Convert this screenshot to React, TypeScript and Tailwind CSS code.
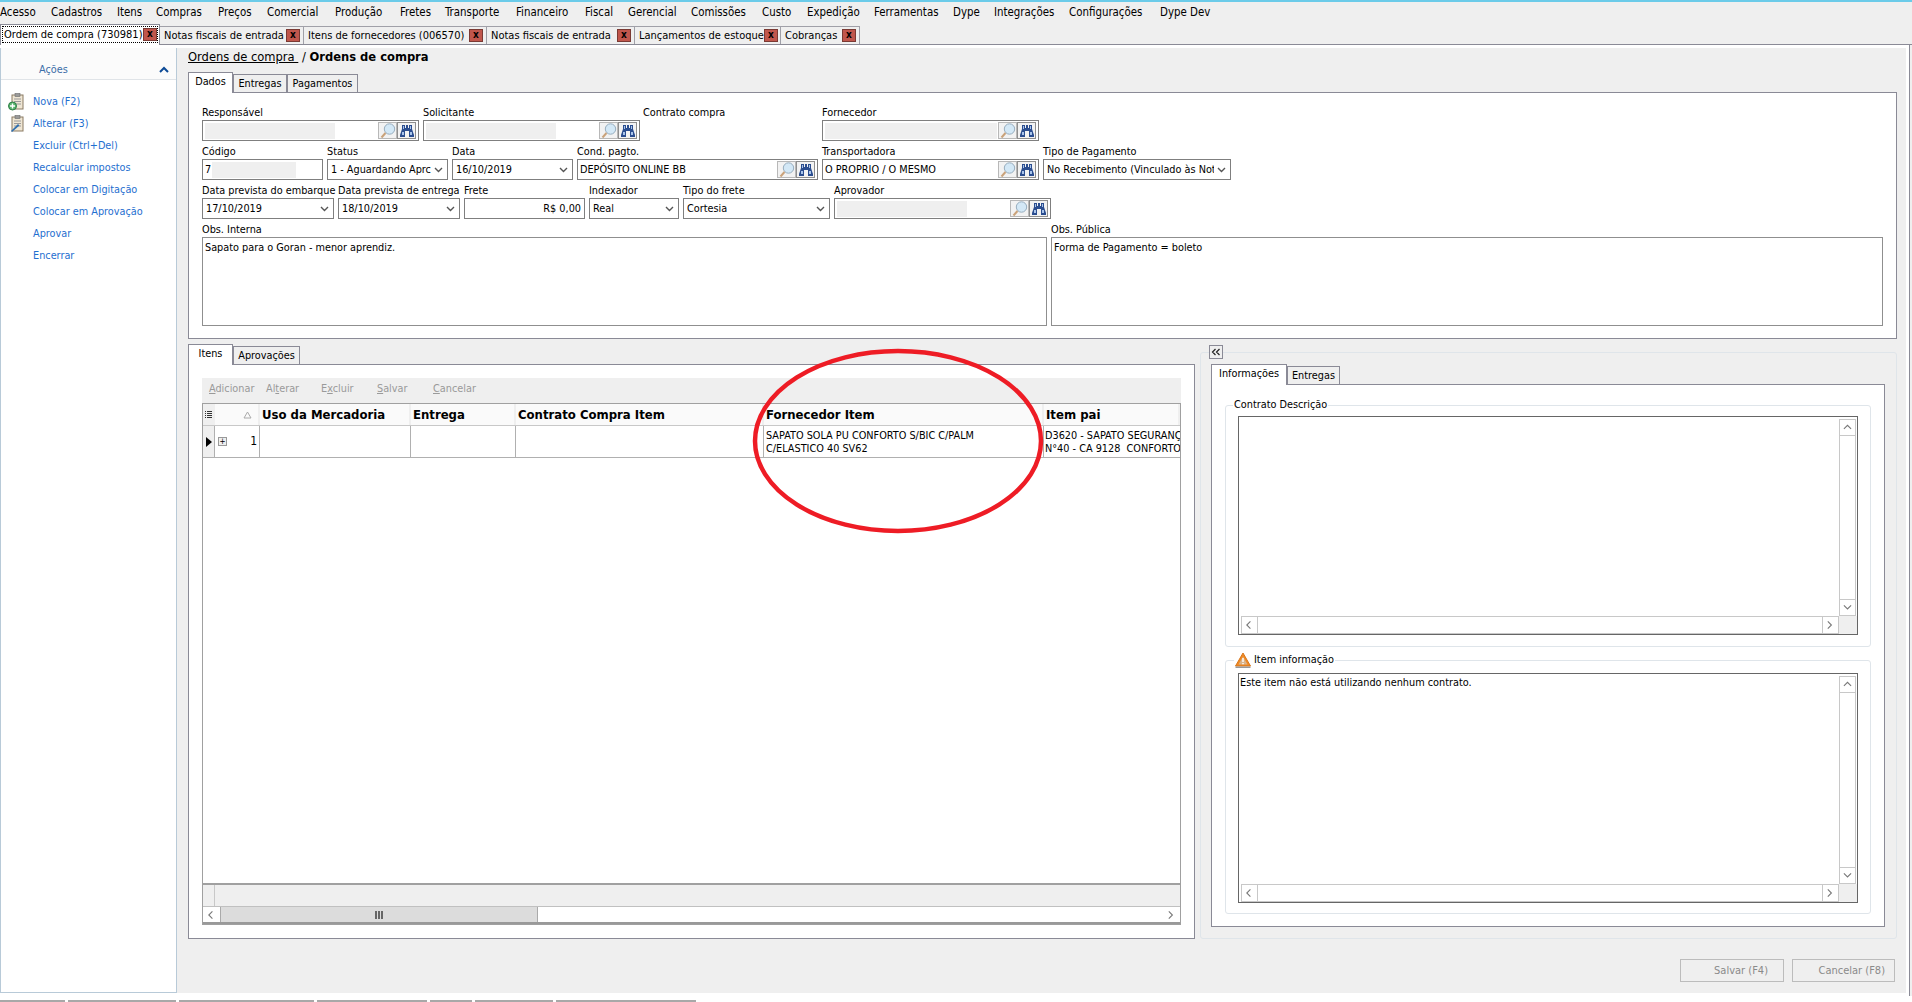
import React from "react";

const menuItems: [string, string][] = [
  ["Acesso", "w-[51px]"], ["Cadastros", "w-[66px]"], ["Itens", "w-[39px]"], ["Compras", "w-[62px]"], ["Preços", "w-[49px]"], ["Comercial", "w-[68px]"], ["Produção", "w-[65px]"], ["Fretes", "w-[45px]"], ["Transporte", "w-[71px]"], ["Financeiro", "w-[69px]"], ["Fiscal", "w-[43px]"], ["Gerencial", "w-[63px]"], ["Comissões", "w-[71px]"], ["Custo", "w-[45px]"], ["Expedição", "w-[67px]"], ["Ferramentas", "w-[79px]"], ["Dype", "w-[41px]"], ["Integrações", "w-[75px]"], ["Configurações", "w-[91px]"], ["Dype Dev", "w-[60px]"],
];

const CloseX = () => (
  <span className="flex h-[13px] w-[14px] shrink-0 items-center justify-center border border-[#7a3a34] bg-[#c0564c] pb-[1px] text-[10px] font-bold leading-none text-black">x</span>
);

const DocTab = ({ label, className }: { label: string; className: string }) => (
  <div className={`flex h-[18px] items-center justify-between border border-b-0 border-l-0 border-[#a0a0a8] pl-[4px] pr-[3px] ${className}`}>
    <span className="whitespace-nowrap">{label}</span>
    <CloseX />
  </div>
);

const Magnifier = () => (
  <span className="flex h-[17px] w-[19px] shrink-0 items-center justify-center border border-[#b8b8b8] bg-[#f2f2f2]">
    <svg width="16" height="16" viewBox="0 0 16 16">
      <circle cx="9.5" cy="6" r="5.2" fill="#d3e8f6" stroke="#98aebf" />
      <path d="M5.5 10 L1.5 14.5" stroke="#c9a27a" strokeWidth="2" />
    </svg>
  </span>
);
const Binoc = () => (
  <span className="flex h-[17px] w-[19px] shrink-0 items-center justify-center border border-[#8f8f8f] bg-[#f2f2f2]">
    <svg width="16" height="14" viewBox="0 0 16 14">
      <path d="M3 1h3v3h1V1h2v3h1V1h3v4l2 6v2H10V7H6v6H1v-2l2-6z" fill="#2b4d8f" />
      <path d="M3 8h2v3H3zM11 8h2v3h-2zM4 2h1v3H4zM11 2h1v3h-1z" fill="#a9c4ea" />
    </svg>
  </span>
);

const Lookup = ({ className, fill, text }: { className: string; fill?: string; text?: string }) => (
  <div className={`flex h-[21px] items-center border border-[#7f7f7f] bg-white pl-[2px] pr-[2px] ${className}`}>
    {text ? <span className="flex-1 overflow-hidden whitespace-nowrap">{text}</span> : <span className="flex-1"><span className={`block h-[16px] bg-[#efefef] ${fill}`} /></span>}
    <Magnifier />
    <Binoc />
  </div>
);

const Chevron = () => (
  <svg width="9" height="6" viewBox="0 0 9 6" className="shrink-0">
    <path d="M1 1l3.5 3.5L8 1" fill="none" stroke="#555" strokeWidth="1.4" />
  </svg>
);

const Sel = ({ className, text }: { className: string; text: string }) => (
  <div className={`flex h-[21px] items-center justify-between gap-[3px] border border-[#7f7f7f] bg-white pl-[3px] pr-[4px] ${className}`}>
    <span className="overflow-hidden whitespace-nowrap">{text}</span>
    <Chevron />
  </div>
);

const Field = ({ label, className, children }: { label: string; className: string; children?: React.ReactNode }) => (
  <div className={`flex flex-col ${className}`}>
    <span className="h-[14px] whitespace-nowrap leading-[14px]">{label}</span>
    {children}
  </div>
);

const TabStrip = ({ tabs }: { tabs: [string, string, boolean][] }) => (
  <div className="flex h-[20px] items-end">
    {tabs.map(([t, w, on]) => (
      <div key={t} className={on ? `relative z-10 -mb-px flex h-[21px] items-start justify-center border border-b-0 border-[#8a8a96] bg-white pt-[2px] ${w}` : `flex h-[18px] items-center justify-center border border-b-0 border-[#8a8a96] bg-[#efefef] ${w}`}>
        {t}
      </div>
    ))}
  </div>
);

const Arrow = ({ d }: { d: "l" | "r" | "u" | "v" }) => {
  const p = d === "l" ? "M6 1L2 5l4 4" : d === "r" ? "M2 1l4 4-4 4" : d === "u" ? "M1 6l4-4 4 4" : "M1 2l4 4 4-4";
  return (
    <svg width="9" height="10" viewBox="0 0 10 10">
      <path d={p} fill="none" stroke="#777" strokeWidth="1.2" />
    </svg>
  );
};

const TextBoxScroll = ({ className, text }: { className: string; text?: string }) => (
  <div className={`mx-[12px] flex flex-col border border-[#666] bg-white ${className}`}>
    <div className="flex min-h-0 flex-1">
      <div className="flex-1 pl-[1px] pt-[2px]">{text}</div>
      <div className="mt-[2px] mr-[1px] flex w-[17px] flex-col justify-between border border-[#c8c8c8]">
        <span className="flex h-[16px] items-center justify-center border-b border-[#c8c8c8]"><Arrow d="u" /></span>
        <span className="flex h-[16px] items-center justify-center border-t border-[#c8c8c8]"><Arrow d="v" /></span>
      </div>
    </div>
    <div className="flex h-[18px]">
      <div className="ml-[2px] flex flex-1 justify-between border border-[#c8c8c8]">
        <span className="flex w-[16px] items-center justify-center border-r border-[#c8c8c8]"><Arrow d="l" /></span>
        <span className="flex w-[16px] items-center justify-center border-l border-[#c8c8c8]"><Arrow d="r" /></span>
      </div>
      <div className="w-[18px] bg-[#efefef]" />
    </div>
  </div>
);

const Clip = ({ edit }: { edit?: boolean }) => (
  <svg width="17" height="18" viewBox="0 0 17 18" className="shrink-0">
    <rect x="4" y="2" width="11" height="14" fill="#efe6d4" stroke="#8a7a62" />
    <rect x="7" y="0.5" width="5" height="3" fill="#9a9a9a" stroke="#6a6a6a" strokeWidth="0.6" />
    <path d="M6 6h7M6 8.5h7M6 11h7" stroke="#9a9a9a" />
    {edit ? <path d="M3 16l7-7 1.5 1.5L4 17z" fill="#2f6fb0" /> : <g><circle cx="4.5" cy="13" r="4" fill="#5ab56e" stroke="#2d7d45" /><path d="M4.5 10.5v5M2 13h5" stroke="#fff" strokeWidth="1.4" /></g>}
  </svg>
);

const Warn = () => (
  <svg width="16" height="16" viewBox="0 0 16 16" className="shrink-0">
    <path d="M8 1L15.5 14H.5z" fill="#f08a24" stroke="#d8761a" />
    <path d="M8 4.5L12.5 12.5H3.5z" fill="#d9b48c" />
    <path d="M8 6v4M8 11v1.2" stroke="#fff" strokeWidth="1.4" />
    <rect x="0.5" y="14.5" width="15" height="1.5" fill="#999" />
  </svg>
);

const HCell = ({ className, children }: { className: string; children?: React.ReactNode }) => (
  <div className={`flex items-center overflow-hidden whitespace-nowrap border-r-2 border-[#efefef] pl-[2px] text-[13px] font-bold text-black ${className}`}>{children}</div>
);
const RCell = ({ className, children }: { className: string; children?: React.ReactNode }) => (
  <div className={`overflow-hidden border-r border-[#b0b0b0] ${className}`}>{children}</div>
);

const actions = ["Excluir (Ctrl+Del)", "Recalcular impostos", "Colocar em Digitação", "Colocar em Aprovação", "Aprovar", "Encerrar"];
const bottomTabs = ["w-[65px]", "w-[108px]", "w-[135px]", "w-[110px]", "w-[42px]", "w-[78px]", "w-[140px]"];

export default function App() {
  return (
    <div className="relative flex h-[1002px] w-[1912px] flex-col overflow-hidden bg-[#efefef] font-['DejaVu_Sans_Condensed','DejaVu_Sans',sans-serif] text-[10.8px] leading-[14px] text-black">
      <div className="h-[2px] bg-[#6bcbe9]" />
      <div className="flex h-[22px] items-center pb-[2px] text-[11.4px]">
        {menuItems.map(([m, w]) => (
          <span key={m} className={`whitespace-nowrap ${w}`}>{m}</span>
        ))}
      </div>
      <div className="flex h-[21px] items-end border-b border-[#8a8a96] text-[11px]">
        <div className="relative z-10 -mb-px flex h-[21px] w-[160px] items-start border border-b-0 border-[#8a8a96] bg-white pt-[2px] pl-[2px] pr-[2px]">
          <div className="flex h-[15px] w-full items-center justify-between pl-[1px] outline-dotted outline-1 outline-black">
            <span className="whitespace-nowrap">Ordem de compra (730981)</span>
            <CloseX />
          </div>
        </div>
        <DocTab label="Notas fiscais de entrada" className="w-[144px]" />
        <DocTab label="Itens de fornecedores (006570)" className="w-[183px]" />
        <DocTab label="Notas fiscais de entrada" className="w-[148px]" />
        <DocTab label="Lançamentos de estoque" className="w-[146px]" />
        <DocTab label="Cobranças" className="w-[79px]" />
      </div>
      <div className="flex min-h-0 flex-1 flex-col">
        <div className="mr-[3px] flex min-h-0 flex-1 border-y-[3px] border-r-[3px] border-white outline-1 outline-[#8a8a96]">
          <aside className="flex w-[177px] shrink-0 flex-col border-x border-b border-[#b8cad8] bg-white">
            <div className="flex h-[32px] shrink-0 items-center justify-between border-b border-[#e0e4e8] bg-[#fbfbfb] pl-[38px] pr-[7px] pt-[12px]">
              <span className="text-[#3b6ea8]">Ações</span>
              <svg width="10" height="7" viewBox="0 0 10 7"><path d="M1 6l4-4 4 4" fill="none" stroke="#0d4a96" strokeWidth="2" /></svg>
            </div>
            <div className="flex flex-col pt-[11px] text-[#1f6fd0]">
              <div className="flex h-[22px] items-center pl-[7px]"><Clip /><span className="ml-[8px]">Nova (F2)</span></div>
              <div className="flex h-[22px] items-center pl-[7px]"><Clip edit /><span className="ml-[8px]">Alterar (F3)</span></div>
              {actions.map((a) => (
                <div key={a} className="flex h-[22px] items-center pl-[32px]">{a}</div>
              ))}
            </div>
          </aside>
          <main className="flex min-w-0 flex-1 flex-col pl-[11px] pr-[9px]">
            <div className="flex h-[24px] shrink-0 items-center pb-[6px] text-[12.8px]">
              <span className="underline">Ordens de compra&nbsp;</span>
              <span>&nbsp;/&nbsp;</span>
              <span className="font-bold">Ordens de compra</span>
            </div>
            <TabStrip tabs={[["Dados", "w-[45px]", true], ["Entregas", "w-[54px]", false], ["Pagamentos", "w-[71px]", false]]} />
            <section className="flex h-[247px] shrink-0 flex-col gap-[4px] border border-[#8a8a96] bg-white pl-[13px] pt-[13px]">
              <div className="flex gap-[4px]">
                <Field label="Responsável" className="w-[217px]"><Lookup className="w-[217px]" fill="w-[130px]" /></Field>
                <Field label="Solicitante" className="w-[217px]"><Lookup className="w-[217px]" fill="w-[130px]" /></Field>
                <Field label="Contrato compra" className="ml-[-1px] w-[175px]" />
                <Field label="Fornecedor" className="w-[217px]"><Lookup className="w-[217px]" fill="w-[172px]" /></Field>
              </div>
              <div className="flex gap-[4px]">
                <Field label="Código" className="w-[121px]">
                  <div className="flex h-[21px] items-center border border-[#7f7f7f] bg-white pl-[2px]"><span>7</span><span className="ml-[1px] h-[16px] w-[84px] bg-[#efefef]" /></div>
                </Field>
                <Field label="Status" className="w-[121px]"><Sel className="w-[121px]" text="1 - Aguardando Aprc" /></Field>
                <Field label="Data" className="w-[121px]"><Sel className="w-[121px]" text="16/10/2019" /></Field>
                <Field label="Cond. pagto." className="w-[241px]"><Lookup className="w-[241px]" text="DEPÓSITO ONLINE BB" /></Field>
                <Field label="Transportadora" className="w-[217px]"><Lookup className="w-[217px]" text="O PROPRIO / O MESMO" /></Field>
                <Field label="Tipo de Pagamento" className="w-[188px]"><Sel className="w-[188px]" text="No Recebimento (Vinculado às Nota" /></Field>
              </div>
              <div className="flex gap-[4px]">
                <Field label="Data prevista do embarque" className="w-[132px]"><Sel className="w-[132px]" text="17/10/2019" /></Field>
                <Field label="Data prevista de entrega" className="w-[122px]"><Sel className="w-[122px]" text="18/10/2019" /></Field>
                <Field label="Frete" className="w-[121px]"><div className="flex h-[21px] items-center justify-end border border-[#7f7f7f] bg-white pr-[3px]">R$ 0,00</div></Field>
                <Field label="Indexador" className="w-[90px]"><Sel className="w-[90px]" text="Real" /></Field>
                <Field label="Tipo do frete" className="w-[147px]"><Sel className="w-[147px]" text="Cortesia" /></Field>
                <Field label="Aprovador" className="w-[217px]"><Lookup className="w-[217px]" fill="w-[130px]" /></Field>
              </div>
              <div className="flex gap-[4px]">
                <Field label="Obs. Interna" className="w-[845px]"><div className="h-[89px] border border-[#8f8f8f] bg-white pl-[2px] pt-[3px]">Sapato para o Goran - menor aprendiz.</div></Field>
                <Field label="Obs. Pública" className="w-[832px]"><div className="h-[89px] border border-[#8f8f8f] bg-white pl-[2px] pt-[3px]">Forma de Pagamento = boleto</div></Field>
              </div>
            </section>
            <div className="mt-[5px] flex shrink-0">
              <div className="flex w-[1007px] flex-col">
                <TabStrip tabs={[["Itens", "w-[45px]", true], ["Aprovações", "w-[67px]", false]]} />
                <section className="flex h-[575px] flex-col border border-[#8a8a96] bg-white px-[13px] pt-[13px]">
                  <div className="flex h-[25px] shrink-0 items-center bg-[#efefef] pb-[3px] pl-[7px] text-[#9a9a9a]">
                    <span className="w-[57px]"><u>A</u>dicionar</span>
                    <span className="w-[55px]">Al<u>t</u>erar</span>
                    <span className="w-[56px]">E<u>x</u>cluir</span>
                    <span className="w-[56px]"><u>S</u>alvar</span>
                    <span><u>C</u>ancelar</span>
                  </div>
                  <div className="flex h-[522px] shrink-0 flex-col border border-[#a0a0a0]">
                    <div className="flex h-[22px] shrink-0 border-b border-[#c8c8c8] bg-[#fafafa]">
                      <HCell className="w-[12px] justify-center bg-[#efefef] !pl-0"><svg width="7" height="9" viewBox="0 0 7 9"><path d="M0 1h1v1H0zM0 3h1v1H0zM0 5h1v1H0zM0 7h1v1H0zM2 1h5v1H2zM2 3h5v1H2zM2 5h5v1H2zM2 7h5v1H2z" fill="#333" /></svg></HCell>
                      <HCell className="w-[45px] justify-end !pr-[6px]"><svg width="9" height="8" viewBox="0 0 9 8"><path d="M4.5 1L8 7H1z" fill="none" stroke="#aaa" /></svg></HCell>
                      <HCell className="w-[151px]">Uso da Mercadoria</HCell>
                      <HCell className="w-[105px]">Entrega</HCell>
                      <HCell className="w-[248px]">Contrato Compra Item</HCell>
                      <HCell className="w-[280px]">Fornecedor Item</HCell>
                      <HCell className="flex-1">Item pai</HCell>
                    </div>
                    <div className="flex h-[32px] shrink-0 border-b border-[#b0b0b0] leading-[13px]">
                      <div className="flex w-[12px] items-center justify-center border-r border-[#b0b0b0] bg-[#efefef]"><svg width="6" height="10" viewBox="0 0 6 10"><path d="M0 0l6 5-6 5z" fill="#000" /></svg></div>
                      <RCell className="flex w-[45px] items-center justify-between pl-[3px] pr-[2px]">
                        <span className="flex h-[9px] w-[9px] items-center justify-center border border-[#999] bg-[#efefef] text-[8px] leading-none">+</span>
                        <span className="text-[12px]">1</span>
                      </RCell>
                      <RCell className="w-[151px]" />
                      <RCell className="w-[105px]" />
                      <RCell className="w-[248px]" />
                      <RCell className="w-[280px] whitespace-pre-line pl-[2px] pt-[3px]">{"SAPATO SOLA PU CONFORTO S/BIC C/PALM\nC/ELASTICO 40 SV62"}</RCell>
                      <div className="flex-1 overflow-hidden whitespace-pre pl-[1px] pt-[3px]">{"D3620 - SAPATO SEGURANÇA\nN°40 - CA 9128  CONFORTO"}</div>
                    </div>
                    <div className="min-h-0 flex-1 border-b-2 border-[#a0a0a0] bg-white" />
                    <div className="flex h-[22px] shrink-0 border-b border-[#c0c0c0] bg-[#efefef]">
                      <div className="w-[12px] border-r border-[#c8c8c8]" />
                    </div>
                    <div className="flex h-[17px] shrink-0 border-b-2 border-[#999]">
                      <span className="flex w-[17px] items-center justify-center"><Arrow d="l" /></span>
                      <span className="flex w-[318px] items-center justify-center border-x border-[#aaa] bg-[#dcdcdc]"><svg width="8" height="8" viewBox="0 0 8 8"><path d="M0 0h2v8H0zM3 0h2v8H3zM6 0h2v8H6z" fill="#666" /></svg></span>
                      <span className="flex-1" />
                      <span className="flex w-[17px] items-center justify-center"><Arrow d="r" /></span>
                    </div>
                  </div>
                </section>
              </div>
              <div className="relative ml-[5px] mt-[8px] flex h-[587px] flex-1 flex-col rounded-[3px] border border-[#dfe5ea] pl-[10px] pr-[11px] pt-[11px]">
                <span className="absolute -top-[8px] left-[8px] flex h-[14px] w-[14px] items-center justify-center border border-[#8a8a96] bg-[#efefef]">
                  <svg width="10" height="8" viewBox="0 0 10 8"><path d="M4.5 1L1.5 4l3 3M8.5 1L5.5 4l3 3" fill="none" stroke="#222" strokeWidth="1.2" /></svg>
                </span>
                <TabStrip tabs={[["Informações", "w-[76px]", true], ["Entregas", "w-[53px]", false]]} />
                <section className="flex h-[543px] flex-col gap-[5px] border border-[#8a8a96] bg-white px-[13px] pt-[13px]">
                  <fieldset className="h-[249px] rounded-[3px] border border-[#dfe5ea]">
                    <legend className="ml-[7px] px-[1px]">Contrato Descrição</legend>
                    <TextBoxScroll className="mt-[4px] h-[219px]" />
                  </fieldset>
                  <fieldset className="h-[262px] rounded-[3px] border border-[#dfe5ea]">
                    <legend className="ml-[8px] flex items-center gap-[3px] px-[1px]"><Warn /> Item informação</legend>
                    <TextBoxScroll className="mt-[5px] h-[230px]" text="Este item não está utilizando nenhum contrato." />
                  </fieldset>
                </section>
              </div>
            </div>
            <div className="mt-[20px] flex shrink-0 justify-end gap-[8px] pr-[2px] text-[11px] text-[#8a8a8a]">
              <div className="flex h-[23px] w-[104px] items-center justify-end border border-[#bcbcbc] pr-[15px]">Salvar (F4)</div>
              <div className="flex h-[23px] w-[103px] items-center justify-end border border-[#bcbcbc] pr-[9px]">Cancelar (F8)</div>
            </div>
          </main>
        </div>
        <div className="flex h-[6px] shrink-0 items-end gap-[3px] bg-white">
          {bottomTabs.map((w) => (
            <span key={w} className={`h-[2px] bg-[#a8a8a8] ${w}`} />
          ))}
        </div>
      </div>
      <svg className="pointer-events-none absolute left-[750px] top-[347px]" width="296" height="188" viewBox="0 0 296 188">
        <ellipse cx="148" cy="94" rx="143" ry="90" fill="none" stroke="#ee1c25" strokeWidth="4.5" />
      </svg>
    </div>
  );
}
